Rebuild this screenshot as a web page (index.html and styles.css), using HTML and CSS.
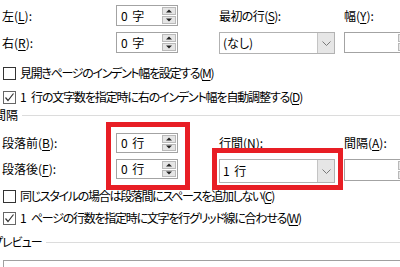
FILE: index.html
```html
<!DOCTYPE html>
<html lang="ja">
<head>
<meta charset="utf-8">
<link rel="stylesheet" href="styles.css">
</head>
<body>
<div class="dlg">
  <div class="grid g1">
    <span class="lbl">左(<u>L</u>):</span>
    <div class="spin"><span class="val">0 字</span><span class="btns"><i class="up"></i><i class="dn"></i></span></div>
    <span class="lbl c4 tight">最初の行(<u>S</u>):</span>
    <span class="lbl c6">幅(<u>Y</u>):</span>
    <span class="lbl">右(<u>R</u>):</span>
    <div class="spin"><span class="val">0 字</span><span class="btns"><i class="up"></i><i class="dn"></i></span></div>
    <div class="combo c4"><span class="val">(なし)</span><span class="arrow"><svg width="9" height="5" viewBox="0 0 9 5"><path d="M0.5 0.5 L4.5 4.5 L8.5 0.5" fill="none" stroke="#7a7a7a" stroke-width="1"/></svg></span></div>
    <div class="spin c6"><span class="val"></span><span class="btns"><i class="up"></i><i class="dn"></i></span></div>
  </div>

  <div class="chk c1"><span class="box"></span><span class="t1">見開きページのインデント幅を設定する(<u>M</u>)</span></div>
  <div class="chk c2"><span class="box on"><svg width="11" height="11" viewBox="0 0 11 11"><path d="M1.5 5.5 L4 8.5 L9.5 1.5" fill="none" stroke="#333" stroke-width="1.2"/></svg></span><span class="t2">1 行の文字数を指定時に右のインデント幅を自動調整する(<u>D</u>)</span></div>

  <div class="head h1"><span>間隔</span><span class="rule"></span></div>

  <div class="grid g2">
    <span class="lbl">段落前(<u>B</u>):</span>
    <div class="spin"><span class="val">0 行</span><span class="btns"><i class="up"></i><i class="dn"></i></span></div>
    <span class="lbl c4">行間(<u>N</u>):</span>
    <span class="lbl c6">間隔(<u>A</u>):</span>
    <span class="lbl">段落後(<u>F</u>):</span>
    <div class="spin"><span class="val">0 行</span><span class="btns"><i class="up"></i><i class="dn"></i></span></div>
    <div class="combo tall c4"><span class="val">1 行</span><span class="arrow"><svg width="9" height="5" viewBox="0 0 9 5"><path d="M0.5 0.5 L4.5 4.5 L8.5 0.5" fill="none" stroke="#7a7a7a" stroke-width="1"/></svg></span></div>
    <div class="spin mid c6"><span class="val"></span><span class="btns"><i class="up"></i><i class="dn"></i></span></div>
  </div>

  <div class="chk c3"><span class="box"></span><span class="t3">同じスタイルの場合は段落間にスペースを追加しない(<u>C</u>)</span></div>
  <div class="chk c4b"><span class="box on"><svg width="11" height="11" viewBox="0 0 11 11"><path d="M1.5 5.5 L4 8.5 L9.5 1.5" fill="none" stroke="#333" stroke-width="1.2"/></svg></span><span class="t4">1 ページの行数を指定時に文字を行グリッド線に合わせる(<u>W</u>)</span></div>

  <div class="head h2"><span class="tp">プレビュー</span><span class="rule"></span></div>
  <div class="preview"></div>

  <div class="mark m1"></div>
  <div class="mark m2"></div>
</div>
</body>
</html>
```
FILE: styles.css
```css
html, body {
  margin: 0;
  padding: 0;
  background: #fff;
}
body {
  width: 400px;
  height: 267px;
  overflow: hidden;
  font-family: "Noto Sans CJK JP", "Noto Sans", sans-serif;
  font-size: 12px;
  font-feature-settings: "palt";
  color: #000;
}
u { text-decoration: underline; text-underline-offset: 2px; }
.dlg {
  position: relative;
  width: 400px;
  height: 267px;
  overflow: hidden;
}
.grid {
  display: grid;
  grid-template-columns: 114px 62px 41px 116px 9px 70px;
  padding-left: 2px;
  align-items: center;
}
.g1 {
  grid-template-rows: 21px 21px;
  row-gap: 6px;
  margin-top: 5px;
}
.g2 {
  grid-template-rows: 20px 20px;
  row-gap: 6px;
  margin-top: 12px;
}
.c4 { grid-column: 4; }
.c6 { grid-column: 6; }
.lbl {
  white-space: nowrap;
  line-height: 14px;
}
.tight { letter-spacing: -0.6px; }
.spin {
  grid-column: 2;
  height: 100%;
  box-sizing: border-box;
  border: 1px solid #a3a3a3;
  background: #fff;
  display: flex;
  align-items: center;
  justify-content: space-between;
  padding: 1px 1px 1px 4px;
}
.spin.c6 { grid-column: 6; }
.spin.mid { height: 22px; align-self: start; }
.val { white-space: nowrap; line-height: 14px; word-spacing: 2px; }
.btns {
  display: flex;
  flex-direction: column;
  gap: 1px;
  width: 14px;
  height: 100%;
}
.btns i {
  flex: 1;
  background: #e5e5e5;
  border: 1px solid #b9b9b9;
  position: relative;
}
.btns i::after {
  content: "";
  position: absolute;
  left: 50%;
  top: 50%;
  transform: translate(-50%, -50%);
  border-left: 3px solid transparent;
  border-right: 3px solid transparent;
}
.btns i.up::after { border-bottom: 3px solid #222; }
.btns i.dn::after { border-top: 3px solid #222; }
.combo {
  height: 22px;
  box-sizing: border-box;
  border: 1px solid #b2b2b2;
  background: #fff;
  display: flex;
  align-items: stretch;
  justify-content: space-between;
  align-self: start;
}
.combo .val {
  display: flex;
  align-items: center;
  padding-left: 3px;
}
.combo.tall { height: 24px; }
.arrow {
  width: 16px;
  background: #e6e6e6;
  border-left: 1px solid #c4c4c4;
  display: flex;
  align-items: center;
  justify-content: center;
}
.chk {
  display: flex;
  align-items: center;
  gap: 4px;
  height: 22px;
  padding-left: 3px;
  white-space: nowrap;
  line-height: 14px;
}
.c1 { margin-top: 9px; }
.c2 { margin-top: 2px; }
.c3 { margin-top: 6px; }
.c4b { margin-top: 0; }
.t1 { letter-spacing: -1.3px; }
.t2 { letter-spacing: -1.15px; word-spacing: 4px; }
.t3 { letter-spacing: -1.3px; }
.t4 { letter-spacing: -1.25px; word-spacing: 4px; }
.box {
  width: 13px;
  height: 13px;
  box-sizing: border-box;
  border: 1px solid #333;
  background: #fff;
  flex: none;
  display: flex;
  align-items: center;
  justify-content: center;
}
.box.on { border-color: #666; }
.head {
  display: flex;
  align-items: center;
  gap: 4px;
  height: 12px;
  line-height: 12px;
  white-space: nowrap;
}
.h1 { margin-left: -6px; margin-top: 1px; }
.h2 { margin-left: -8px; margin-top: 7px; }
.tp { letter-spacing: -1px; }
.rule {
  flex: 1;
  height: 1px;
  background: #dcdcdc;
}
.preview {
  margin: 12px 0 0 3px;
  height: 20px;
  border: 1px solid #a0a0a0;
  border-right: none;
  border-bottom: none;
}
.mark {
  position: absolute;
  box-sizing: border-box;
  border: 5px solid #e81e25;
}
.m1 { left: 106px; top: 122px; width: 84px; height: 68px; }
.m2 { left: 212px; top: 148px; width: 131px; height: 42px; }
```
